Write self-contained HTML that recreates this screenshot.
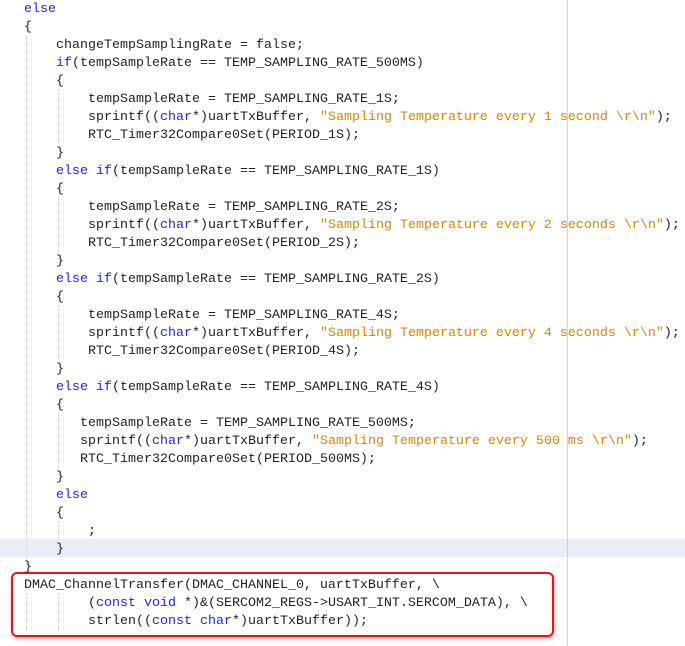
<!DOCTYPE html>
<html><head><meta charset="utf-8"><style>
html,body{margin:0;padding:0;background:#fff;width:685px;height:646px;overflow:hidden;position:relative}
#t{position:absolute;left:0;top:2px;width:685px;height:646px}
.l{position:absolute;left:0;height:18px;line-height:18px;font-family:"Liberation Mono",monospace;font-size:13.33px;color:#222;white-space:pre}
.k{color:#2424d8}.s{color:#d4870c}
.g{position:absolute;width:0;border-left:1px dotted #d0d0d0}
</style></head><body>
<div style="position:absolute;left:0;top:539px;width:685px;height:18px;background:#e8eef8"></div>
<div style="position:absolute;left:567px;top:0;width:1px;height:646px;background:#f4c4c4"></div>
<div class="g" style="left:26px;top:36px;height:530px"></div>
<div class="g" style="left:58px;top:90px;height:54px"></div>
<div class="g" style="left:58px;top:198px;height:54px"></div>
<div class="g" style="left:58px;top:306px;height:54px"></div>
<div class="g" style="left:58px;top:414px;height:54px"></div>
<div class="g" style="left:58px;top:522px;height:18px"></div>
<div class="g" style="left:26px;top:594px;height:36px"></div>
<div class="g" style="left:58px;top:594px;height:36px"></div>
<div style="position:absolute;left:11px;top:572px;width:539px;height:61px;border:2px solid #e8141c;border-radius:6px;box-shadow:1px 2px 4px rgba(0,0,0,0.3)"></div>
<div id="t">
<div class="l" style="top:-1px;left:24px"><span class="k">else</span></div>
<div class="l" style="top:17px;left:24px">{</div>
<div class="l" style="top:35px;left:56px">changeTempSamplingRate = false;</div>
<div class="l" style="top:53px;left:56px"><span class="k">if</span>(tempSampleRate == TEMP_SAMPLING_RATE_500MS)</div>
<div class="l" style="top:71px;left:56px">{</div>
<div class="l" style="top:89px;left:88px">tempSampleRate = TEMP_SAMPLING_RATE_1S;</div>
<div class="l" style="top:107px;left:88px">sprintf((<span class="k">char</span>*)uartTxBuffer, <span class="s">"Sampling Temperature every 1 second \r\n"</span>);</div>
<div class="l" style="top:125px;left:88px">RTC_Timer32Compare0Set(PERIOD_1S);</div>
<div class="l" style="top:143px;left:56px">}</div>
<div class="l" style="top:161px;left:56px"><span class="k">else if</span>(tempSampleRate == TEMP_SAMPLING_RATE_1S)</div>
<div class="l" style="top:179px;left:56px">{</div>
<div class="l" style="top:197px;left:88px">tempSampleRate = TEMP_SAMPLING_RATE_2S;</div>
<div class="l" style="top:215px;left:88px">sprintf((<span class="k">char</span>*)uartTxBuffer, <span class="s">"Sampling Temperature every 2 seconds \r\n"</span>);</div>
<div class="l" style="top:233px;left:88px">RTC_Timer32Compare0Set(PERIOD_2S);</div>
<div class="l" style="top:251px;left:56px">}</div>
<div class="l" style="top:269px;left:56px"><span class="k">else if</span>(tempSampleRate == TEMP_SAMPLING_RATE_2S)</div>
<div class="l" style="top:287px;left:56px">{</div>
<div class="l" style="top:305px;left:88px">tempSampleRate = TEMP_SAMPLING_RATE_4S;</div>
<div class="l" style="top:323px;left:88px">sprintf((<span class="k">char</span>*)uartTxBuffer, <span class="s">"Sampling Temperature every 4 seconds \r\n"</span>);</div>
<div class="l" style="top:341px;left:88px">RTC_Timer32Compare0Set(PERIOD_4S);</div>
<div class="l" style="top:359px;left:56px">}</div>
<div class="l" style="top:377px;left:56px"><span class="k">else if</span>(tempSampleRate == TEMP_SAMPLING_RATE_4S)</div>
<div class="l" style="top:395px;left:56px">{</div>
<div class="l" style="top:413px;left:80px">tempSampleRate = TEMP_SAMPLING_RATE_500MS;</div>
<div class="l" style="top:431px;left:80px">sprintf((<span class="k">char</span>*)uartTxBuffer, <span class="s">"Sampling Temperature every 500 ms \r\n"</span>);</div>
<div class="l" style="top:449px;left:80px">RTC_Timer32Compare0Set(PERIOD_500MS);</div>
<div class="l" style="top:467px;left:56px">}</div>
<div class="l" style="top:485px;left:56px"><span class="k">else</span></div>
<div class="l" style="top:503px;left:56px">{</div>
<div class="l" style="top:521px;left:88px">;</div>
<div class="l" style="top:539px;left:56px">}</div>
<div class="l" style="top:557px;left:24px">}</div>
<div class="l" style="top:575px;left:24px">DMAC_ChannelTransfer(DMAC_CHANNEL_0, uartTxBuffer, \</div>
<div class="l" style="top:593px;left:88px">(<span class="k">const void</span> *)&amp;(SERCOM2_REGS-&gt;USART_INT.SERCOM_DATA), \</div>
<div class="l" style="top:611px;left:88px">strlen((<span class="k">const char</span>*)uartTxBuffer));</div>
</div>
</body></html>
